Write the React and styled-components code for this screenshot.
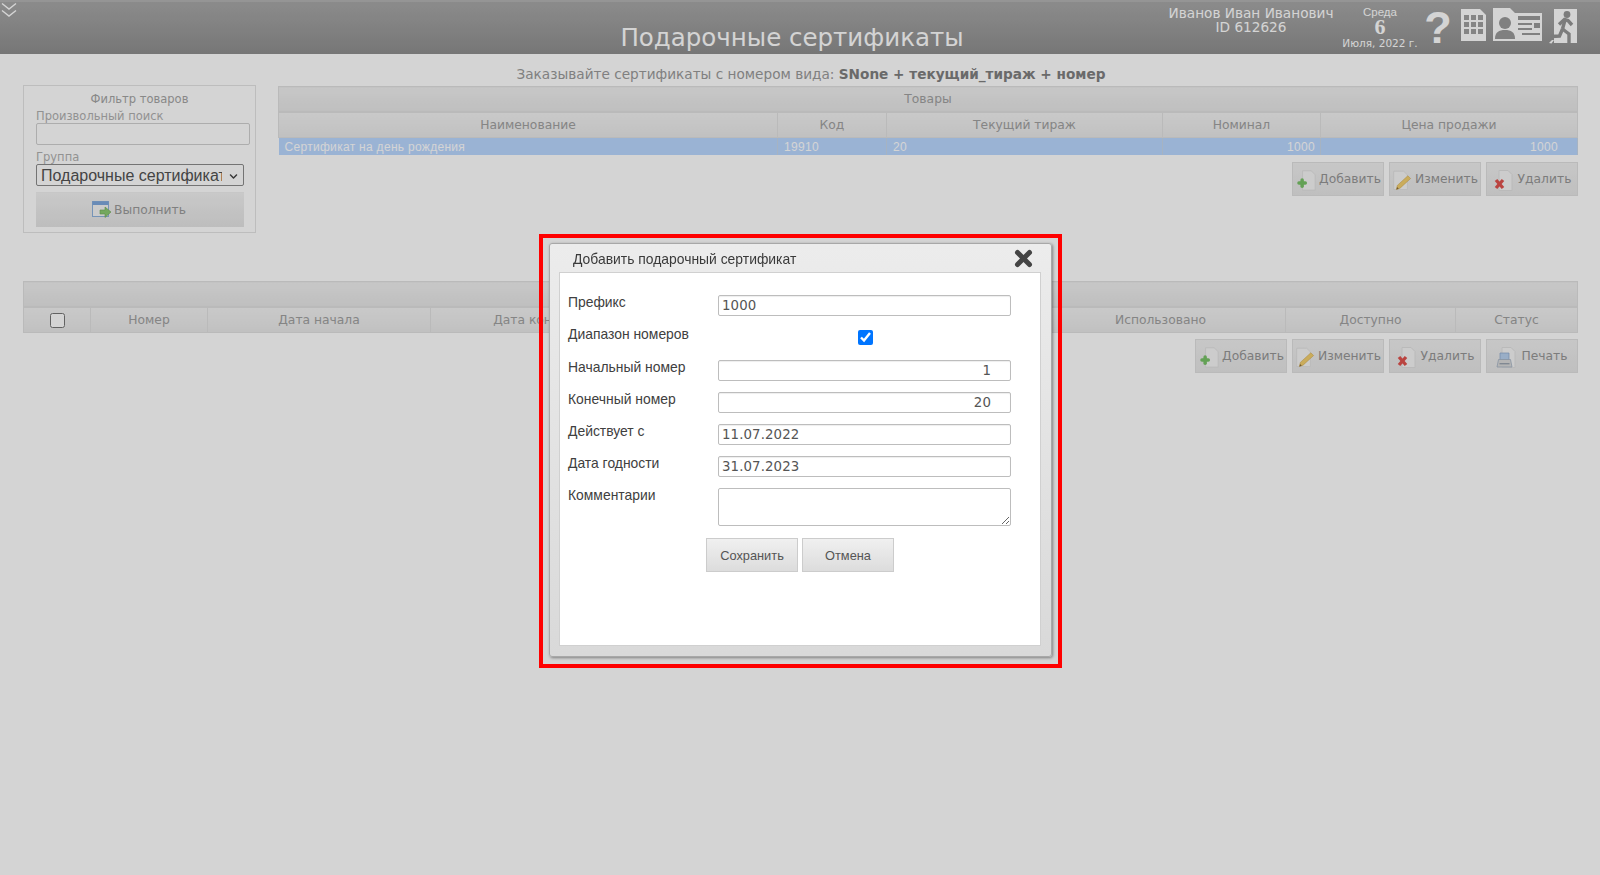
import React from 'react';
import styled, { createGlobalStyle } from 'styled-components';
import { FaChevronDown } from 'react-icons/fa';

const GlobalStyle = createGlobalStyle`
  html, body {
    margin: 0;
    padding: 0;
    background: #fff;
  }
  body {
    font-family: "DejaVu Sans", sans-serif;
    height: 875px;
    overflow: hidden;
  }
`;

const Header = styled.header`
  height: 54px;
  box-sizing: border-box;
  border-top: 2px solid #b4b4b4;
  background: linear-gradient(#a8a8a8, #8f8f8f);
  display: grid;
  grid-template-columns: 1fr auto;
  position: relative;
  color: #fff;
`;

const MenuToggle = styled.div`
  position: absolute;
  left: 1px;
  top: 0;
  line-height: 0;
`;

const PageTitle = styled.h1`
  position: absolute;
  left: 0;
  right: 16px;
  top: 22px;
  margin: 0;
  text-align: center;
  font-size: 24.5px;
  line-height: 28px;
  font-weight: 400;
`;

const UserBar = styled.div`
  grid-column: 2;
  display: flex;
  align-items: flex-start;
  padding: 5px 22px 0 0;
`;

const UserName = styled.div`
  width: 166px;
  margin-top: -1px;
  text-align: center;
  font-size: 13.65px;
  line-height: 14px;
  white-space: nowrap;
`;

const DateBlock = styled.div`
  width: 78px;
  margin-left: 7px;
  text-align: center;
`;

const DateDay = styled.div`
  font-family: "Liberation Sans", sans-serif;
  font-size: 11.5px;
  line-height: 12px;
  margin-top: -1px;
`;

const DateNum = styled.div`
  font-family: "Liberation Serif", serif;
  font-weight: 700;
  font-size: 22px;
  line-height: 18px;
`;

const DateMonth = styled.div`
  font-size: 10.5px;
  line-height: 13px;
  margin-top: 1px;
  white-space: nowrap;
`;

const HelpMark = styled.div`
  width: 28px;
  margin-left: 5px;
  font-family: "Liberation Sans", sans-serif;
  font-weight: 700;
  font-size: 45px;
  line-height: 42px;
  text-align: center;
`;

const HeaderIcons = styled.div`
  display: flex;
  align-items: flex-start;
  gap: 7px;
  margin-left: 9px;
  padding-top: 1px;
`;

const Hint = styled.p`
  margin: 0;
  height: 33px;
  padding: 12px 0 0 22px;
  box-sizing: border-box;
  text-align: center;
  font-size: 13.65px;
  line-height: 16px;
  color: #9a9a9a;
  strong {
    color: #808080;
  }
`;

const Content = styled.main`
  padding: 0 22px 0 23px;
`;

const TopRow = styled.div`
  display: grid;
  grid-template-columns: 233px 1fr;
  column-gap: 22px;
  height: 194px;
`;

const FilterBox = styled.aside`
  height: 148px;
  margin-top: -2px;
  box-sizing: border-box;
  border: 1px solid #e4e4e4;
  padding: 6px 12px 0;
`;

const FilterTitle = styled.div`
  text-align: center;
  font-size: 11.5px;
  line-height: 14px;
  color: #a4a4a4;
`;

const FilterLabel = styled.label`
  display: block;
  font-size: 11.5px;
  line-height: 14px;
  color: #b0b0b0;
  margin-top: ${({ $gap }) => $gap || 0}px;
`;

const FilterInput = styled.input`
  display: block;
  box-sizing: border-box;
  width: 214px;
  height: 22px;
  margin: 0;
  border: 1px solid #d0d0d0;
  border-radius: 2px;
  background: #fff;
`;

const SelectWrap = styled.div`
  position: relative;
  width: 208px;
  svg {
    position: absolute;
    right: 6px;
    top: 8px;
    color: #444;
  }
`;

const GroupSelect = styled.select`
  display: block;
  box-sizing: border-box;
  width: 208px;
  height: 22px;
  margin: 0;
  padding: 0 21px 0 4px;
  appearance: none;
  border: 1px solid #8c8c8c;
  border-radius: 2px;
  background: #fff;
  font-family: "Liberation Sans", sans-serif;
  font-size: 16px;
  color: #525252;
`;

const RunButton = styled.button`
  display: flex;
  align-items: center;
  justify-content: center;
  gap: 2px;
  box-sizing: border-box;
  width: 208px;
  height: 35px;
  margin-top: 6px;
  padding: 0 2px 0 0;
  border: 0;
  border-top: 1px solid #f0f0f0;
  background: linear-gradient(#f2f2f2, #e4e4e4);
  font-family: "DejaVu Sans", sans-serif;
  font-size: 12.3px;
  color: #9a9a9a;
`;

const TableColumn = styled.div`
  margin-top: -1px;
`;

const DataTable = styled.table`
  width: 100%;
  table-layout: fixed;
  border-collapse: collapse;
  box-sizing: border-box;
`;

const Caption = styled.th`
  height: 24px;
  padding: 0;
  border: 1px solid #e0e0e0;
  border-bottom-width: 2px;
  background: linear-gradient(#f0f0f0, #e6e6e6);
  font-size: 12.3px;
  font-weight: 400;
  color: #a0a0a0;
`;

const HeadCell = styled.th`
  height: 24px;
  padding: 0;
  border: 1px solid #e0e0e0;
  background: linear-gradient(#f2f2f2, #e8e8e8);
  font-size: 12.3px;
  font-weight: 400;
  color: #a0a0a0;
  overflow: hidden;
  white-space: nowrap;
`;

const Cell = styled.td`
  height: 17px;
  padding: ${({ $right }) => ($right ? `0 ${$right}px 0 0` : '0 0 0 6px')};
  border-right: 1px solid #c8d8ea;
  background: #bad8ff;
  font-family: "Liberation Sans", "DejaVu Sans", sans-serif;
  font-size: 12px;
  letter-spacing: 0.3px;
  color: #ffffff;
  text-align: ${({ $right }) => ($right ? 'right' : 'left')};
`;

const HeadCheck = styled.input`
  display: block;
  margin: 0 auto;
  width: 15px;
  height: 15px;
`;

const ActionRow = styled.div`
  display: flex;
  justify-content: flex-end;
  gap: 5px;
  margin-top: ${({ $top }) => $top}px;
`;

const ActionButton = styled.button`
  display: flex;
  align-items: center;
  justify-content: center;
  gap: 3px;
  box-sizing: border-box;
  width: 92px;
  height: 34px;
  padding: 0 2px 0 0;
  border: 1px solid #e0e0e0;
  background: linear-gradient(#f0f0f0, #e6e6e6);
  font-family: "DejaVu Sans", sans-serif;
  font-size: 12.3px;
  color: #969696;
  white-space: nowrap;
`;

const LowerTable = styled.section`
  margin-top: 0;
`;

const Overlay = styled.div`
  position: fixed;
  inset: 0;
  background: rgba(0, 0, 0, 0.17);
`;

const RedFrame = styled.div`
  position: absolute;
  left: 539px;
  top: 234px;
  width: 523px;
  height: 434px;
  box-sizing: border-box;
  border: 4px solid #ff0000;
  padding: 5px 6px;
`;

const Modal = styled.div`
  box-sizing: border-box;
  height: 414px;
  padding: 0 10px 10px 9px;
  display: flex;
  flex-direction: column;
  border: 1px solid #a8a8a8;
  border-radius: 3px;
  background: linear-gradient(#ececec, #d9d9d9);
  box-shadow: 1px 1px 3px rgba(0, 0, 0, 0.4);
`;

const ModalHead = styled.div`
  height: 28px;
  flex: none;
  display: flex;
  align-items: center;
  justify-content: space-between;
  padding: 1px 8px 0 14px;
  box-sizing: border-box;
  font-family: "Liberation Sans", sans-serif;
  font-size: 13.9px;
  color: #3a3a3a;
`;

const ModalBody = styled.form`
  flex: 1;
  box-sizing: border-box;
  padding: 22px 29px 0 8px;
  border: 1px solid #d0d0d0;
  background: #fff;
`;

const FormRow = styled.div`
  display: grid;
  grid-template-columns: 150px 1fr;
  height: ${({ $h }) => $h || 32}px;
`;

const FormLabel = styled.label`
  margin-top: -1px;
  font-family: "Liberation Sans", sans-serif;
  font-size: 13.9px;
  line-height: 16px;
  color: #404040;
`;

const TextField = styled.input`
  box-sizing: border-box;
  width: 293px;
  height: 21px;
  margin: 0;
  padding: 0 ${({ $end }) => ($end ? 19 : 3)}px 0 3px;
  border: 1px solid #bdbdbd;
  border-radius: 2px;
  box-shadow: inset 0 1px 1px rgba(0, 0, 0, 0.07);
  font-family: "DejaVu Sans", sans-serif;
  font-size: 13.33px;
  letter-spacing: 0.1px;
  color: #555;
  text-align: ${({ $end }) => ($end ? 'right' : 'left')};
`;

const CommentField = styled.textarea`
  display: block;
  box-sizing: border-box;
  width: 293px;
  height: 38px;
  margin: 0;
  border: 1px solid #bdbdbd;
  border-radius: 2px;
`;

const RangeCheck = styled.input`
  justify-self: center;
  width: 15px;
  height: 15px;
  margin: 3px 0 0;
  transform: translateX(1px);
`;

const ModalActions = styled.div`
  display: flex;
  gap: 4px;
  margin: 11px 0 0 138px;
`;

const ModalButton = styled.button`
  box-sizing: border-box;
  width: 92px;
  height: 34px;
  padding: 0;
  border: 1px solid #cccccc;
  background: linear-gradient(#f0f0f0, #dcdcdc);
  font-family: "Liberation Sans", sans-serif;
  font-size: 12.8px;
  color: #555;
`;

const ChevronsIcon = () => (
  <svg width="16" height="18" viewBox="0 0 16 18" fill="none" stroke="#ffffff" strokeWidth="1.4">
    <path d="M1 1.5 L8 7 L15 1.5" />
    <path d="M1 8.5 L8 14 L15 8.5" />
  </svg>
);

const CloseIcon = () => (
  <svg width="19" height="19" viewBox="0 0 19 19" fill="none" stroke="#444" strokeWidth="5" strokeLinecap="round">
    <path d="M3.5 3.5 L15.5 15.5" />
    <path d="M15.5 3.5 L3.5 15.5" />
  </svg>
);

const CalcIcon = () => (
  <svg width="25" height="34" viewBox="0 0 25 34">
    <path d="M0 1 H19 L25 7 V33 H0 Z" fill="#ffffff" />
    {[0, 1, 2].map((r) =>
      [0, 1, 2].map((c) => (
        <rect key={`${r}${c}`} x={3 + c * 7} y={7 + r * 7} width="5" height="5" fill="#a0a0a0" />
      ))
    )}
  </svg>
);

const CardIcon = () => (
  <svg width="49" height="34" viewBox="0 0 49 34">
    <path d="M0 0 H17 L22 5 H49 V33 H0 Z" fill="#ffffff" />
    <circle cx="12" cy="15" r="6" fill="#9a9a9a" />
    <path d="M2 31 C2 24 6 22 12 22 C18 22 22 24 22 31 Z" fill="#9a9a9a" />
    <rect x="25" y="8" width="22" height="4" fill="#9a9a9a" />
    <rect x="25" y="15" width="14" height="2" fill="#9a9a9a" />
    <rect x="41" y="15" width="6" height="5" fill="#9a9a9a" />
    <rect x="25" y="20" width="14" height="2" fill="#9a9a9a" />
    <rect x="29" y="25" width="18" height="2" fill="#9a9a9a" />
  </svg>
);

const ExitIcon = () => (
  <svg width="29" height="36" viewBox="0 0 29 36">
    <rect x="5" y="1" width="23" height="34" fill="#ffffff" />
    <circle cx="18" cy="6.5" r="3.4" fill="#969696" />
    <g fill="none" stroke="#969696" strokeWidth="3.4">
      <path d="M16 12 L13.5 21" />
      <path d="M10 16.5 L15.5 11.5 L19 12.5 L23 17" />
      <path d="M13.5 21 L20 26 L20 35" />
      <path d="M13.5 21 L10.5 28 L2 28.5" />
    </g>
    <path d="M0 35 L3 32 L5 32 L2.5 35.5 Z" fill="#ffffff" />
  </svg>
);

const Sheet = ({ x, w = 13 }) => (
  <path d={`M${x} 4.5 H${x + w - 4} L${x + w} 8.5 V24.5 H${x} Z`} fill="#f6f6f6" stroke="#e0e0e0" />
);

const AddIcon = () => (
  <svg width="24" height="26" viewBox="0 0 24 26">
    <Sheet x={10} />
    <g stroke="#78c267" strokeWidth="3.6" strokeLinecap="round">
      <path d="M9.5 14 V20.5" />
      <path d="M6.2 17.2 H12.8" />
    </g>
  </svg>
);

const EditIcon = () => (
  <svg width="24" height="26" viewBox="0 0 24 26">
    <Sheet x={4} w={15} />
    <path d="M19.5 9.5 L22.5 12.5 L11 23 L7 24.5 L8 20 Z" fill="#f3cf6e" stroke="#cfa950" strokeWidth="0.6" />
    <path d="M7 24.5 L7.7 21.8 L9.6 23.6 Z" fill="#8a6d3a" />
  </svg>
);

const RemoveIcon = () => (
  <svg width="24" height="26" viewBox="0 0 24 26">
    <Sheet x={8} />
    <g stroke="#e0524e" strokeWidth="3.4">
      <path d="M5 14 L12 22" />
      <path d="M12 14 L5 22" />
    </g>
  </svg>
);

const PrintIcon = () => (
  <svg width="24" height="26" viewBox="0 0 24 26">
    <Sheet x={8} />
    <path d="M6 10 H15 V17 H6 Z" fill="#b9d2f0" stroke="#8aa7cc" strokeWidth="0.7" />
    <path d="M4.5 16.5 H16.5 L18 24 H3 Z" fill="#dadada" stroke="#a4b2c4" strokeWidth="0.8" />
    <rect x="5.5" y="20" width="10" height="1.4" fill="#9aa4b0" />
  </svg>
);

const RunIcon = () => (
  <svg width="20" height="18" viewBox="0 0 20 18">
    <rect x="0.5" y="0.5" width="16" height="15" fill="#f4f4f4" stroke="#8fb3dc" />
    <rect x="0.5" y="0.5" width="16" height="3.5" fill="#7fa8dc" />
    <path d="M8 9 H13 V6 L19 11 L13 16.5 V13 H8 Z" fill="#8ccb72" stroke="#6ea858" strokeWidth="0.6" />
  </svg>
);

const App = () => (
  <>
    <GlobalStyle />
    <Header>
      <MenuToggle>
        <ChevronsIcon />
      </MenuToggle>
      <PageTitle>Подарочные сертификаты</PageTitle>
      <UserBar>
        <UserName>
          Иванов Иван Иванович
          <br />
          ID 612626
        </UserName>
        <DateBlock>
          <DateDay>Среда</DateDay>
          <DateNum>6</DateNum>
          <DateMonth>Июля, 2022 г.</DateMonth>
        </DateBlock>
        <HelpMark>?</HelpMark>
        <HeaderIcons>
          <CalcIcon />
          <CardIcon />
          <ExitIcon />
        </HeaderIcons>
      </UserBar>
    </Header>

    <Hint>
      Заказывайте сертификаты с номером вида: <strong>SNone + текущий_тираж + номер</strong>
    </Hint>

    <Content>
      <TopRow>
        <FilterBox>
          <FilterTitle>Фильтр товаров</FilterTitle>
          <FilterLabel $gap={3}>Произвольный поиск</FilterLabel>
          <FilterInput type="text" />
          <FilterLabel $gap={5}>Группа</FilterLabel>
          <SelectWrap>
            <GroupSelect defaultValue="gift">
              <option value="gift">Подарочные сертификаты</option>
            </GroupSelect>
            <FaChevronDown size={9} />
          </SelectWrap>
          <RunButton type="button">
            <RunIcon />
            Выполнить
          </RunButton>
        </FilterBox>

        <TableColumn>
          <DataTable>
            <colgroup>
              <col width="499" />
              <col width="109" />
              <col width="276" />
              <col width="158" />
              <col />
            </colgroup>
            <thead>
              <tr>
                <Caption colSpan={5}>Товары</Caption>
              </tr>
              <tr>
                <HeadCell>Наименование</HeadCell>
                <HeadCell>Код</HeadCell>
                <HeadCell>Текущий тираж</HeadCell>
                <HeadCell>Номинал</HeadCell>
                <HeadCell>Цена продажи</HeadCell>
              </tr>
            </thead>
            <tbody>
              <tr>
                <Cell>Сертификат на день рождения</Cell>
                <Cell>19910</Cell>
                <Cell>20</Cell>
                <Cell $right={5}>1000</Cell>
                <Cell $right={19}>1000</Cell>
              </tr>
            </tbody>
          </DataTable>
          <ActionRow $top={7}>
            <ActionButton type="button"><AddIcon />Добавить</ActionButton>
            <ActionButton type="button"><EditIcon />Изменить</ActionButton>
            <ActionButton type="button"><RemoveIcon />Удалить</ActionButton>
          </ActionRow>
        </TableColumn>
      </TopRow>

      <LowerTable>
        <DataTable>
          <colgroup>
            <col width="67" />
            <col width="117" />
            <col width="223" />
            <col width="200" />
            <col width="405" />
            <col width="250" />
            <col width="170" />
            <col />
          </colgroup>
          <thead>
            <tr>
              <Caption colSpan={8}>&nbsp;</Caption>
            </tr>
            <tr>
              <HeadCell><HeadCheck type="checkbox" /></HeadCell>
              <HeadCell>Номер</HeadCell>
              <HeadCell>Дата начала</HeadCell>
              <HeadCell>Дата конца</HeadCell>
              <HeadCell />
              <HeadCell>Использовано</HeadCell>
              <HeadCell>Доступно</HeadCell>
              <HeadCell>Статус</HeadCell>
            </tr>
          </thead>
        </DataTable>
        <ActionRow $top={6}>
          <ActionButton type="button"><AddIcon />Добавить</ActionButton>
          <ActionButton type="button"><EditIcon />Изменить</ActionButton>
          <ActionButton type="button"><RemoveIcon />Удалить</ActionButton>
          <ActionButton type="button"><PrintIcon />Печать</ActionButton>
        </ActionRow>
      </LowerTable>
    </Content>

    <Overlay />

    <RedFrame>
      <Modal>
        <ModalHead>
          Добавить подарочный сертификат
          <CloseIcon />
        </ModalHead>
        <ModalBody>
          <FormRow>
            <FormLabel>Префикс</FormLabel>
            <TextField type="text" defaultValue="1000" />
          </FormRow>
          <FormRow $h={33}>
            <FormLabel>Диапазон номеров</FormLabel>
            <RangeCheck type="checkbox" defaultChecked />
          </FormRow>
          <FormRow>
            <FormLabel>Начальный номер</FormLabel>
            <TextField type="text" $end defaultValue="1" />
          </FormRow>
          <FormRow>
            <FormLabel>Конечный номер</FormLabel>
            <TextField type="text" $end defaultValue="20" />
          </FormRow>
          <FormRow>
            <FormLabel>Действует с</FormLabel>
            <TextField type="text" defaultValue="11.07.2022" />
          </FormRow>
          <FormRow>
            <FormLabel>Дата годности</FormLabel>
            <TextField type="text" defaultValue="31.07.2023" />
          </FormRow>
          <FormRow $h={39}>
            <FormLabel>Комментарии</FormLabel>
            <CommentField />
          </FormRow>
          <ModalActions>
            <ModalButton type="button">Сохранить</ModalButton>
            <ModalButton type="button">Отмена</ModalButton>
          </ModalActions>
        </ModalBody>
      </Modal>
    </RedFrame>
  </>
);

export default App;
